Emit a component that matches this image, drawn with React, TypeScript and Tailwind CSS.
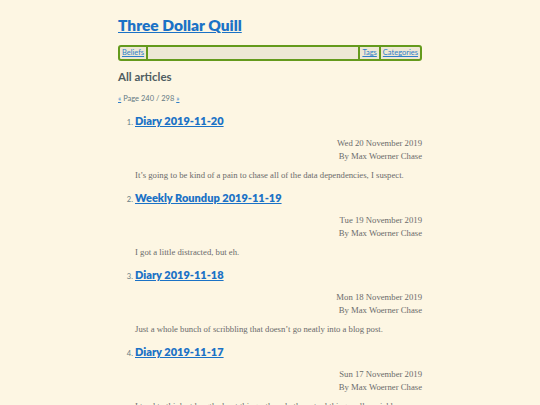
import React from 'react';

const ARTICLES = [
  { n: 1, title: 'Diary 2019-11-20', date: 'Wed 20 November 2019', summary: "It\u2019s going to be kind of a pain to chase all of the data dependencies, I suspect." },
  { n: 2, title: 'Weekly Roundup 2019-11-19', date: 'Tue 19 November 2019', summary: 'I got a little distracted, but eh.' },
  { n: 3, title: 'Diary 2019-11-18', date: 'Mon 18 November 2019', summary: "Just a whole bunch of scribbling that doesn\u2019t go neatly into a blog post." },
  { n: 4, title: 'Diary 2019-11-17', date: 'Sun 17 November 2019', summary: 'I tend to think at length about things, then do the actual thing really quickly.' },
];

const heading = { fontFamily: 'Lato, "Open Sans", sans-serif' };
const body = { fontFamily: '"Liberation Serif", "DejaVu Serif", serif' };

export default function App() {
  return (
    <div className="h-[405px] bg-[#fdf6e3] overflow-hidden">
      <div className="w-[304px] mx-auto pt-[14px]">
        {/* Site title */}
        <h1 className="text-[15.5px] font-extrabold leading-[22px] text-[#1b72c6] underline" style={heading}>
          Three Dollar Quill
        </h1>

        {/* Nav */}
        <nav
          className="mt-[9px] flex items-stretch h-[16px] rounded-[3px] border-2 border-[#649a1c] bg-[#eee8d5] text-[7.5px] leading-[12px]"
          style={heading}
        >
          <a className="px-[2px] text-[#2f7fc9] underline border-r-2 border-[#649a1c]">Beliefs</a>
          <div className="flex-1" />
          <a className="px-[2px] text-[#2f7fc9] underline border-l-2 border-[#649a1c]">Tags</a>
          <a className="px-[2px] text-[#2f7fc9] underline border-l-2 border-[#649a1c]">Categories</a>
        </nav>

        {/* Section heading */}
        <h2 className="mt-[8px] text-[11.5px] font-bold leading-[16px] text-[#4f5d61]" style={heading}>
          All articles
        </h2>

        {/* Pagination */}
        <div className="mt-[9px] text-[7.5px] leading-[10px] text-[#657b83]" style={heading}>
          <a className="text-[#2f7fc9] underline">&laquo;</a> Page 240 / 298{' '}
          <a className="text-[#2f7fc9] underline">&raquo;</a>
        </div>

        {/* Article list */}
        <ol className="mt-[7px] pl-[17px]">
          {ARTICLES.map((a) => (
            <li key={a.n} className="mb-[7px]">
              <div className="flex items-baseline">
                <span className="w-[17px] -ml-[17px] pr-[2px] text-right text-[7.5px] text-[#657b83]" style={heading}>
                  {a.n}.
                </span>
                <a className="text-[11px] font-extrabold leading-[20px] text-[#1b72c6] underline" style={heading}>
                  {a.title}
                </a>
              </div>
              <div className="mt-[5.5px] text-right text-[8.7px] leading-[13px] text-[#6b6b6b]" style={body}>
                <div>{a.date}</div>
                <div>By Max Woerner Chase</div>
              </div>
              <p className="mt-[6.5px] text-[8.7px] leading-[12px] text-[#6b6b6b]" style={body}>
                {a.summary}
              </p>
            </li>
          ))}
        </ol>
      </div>
    </div>
  );
}
